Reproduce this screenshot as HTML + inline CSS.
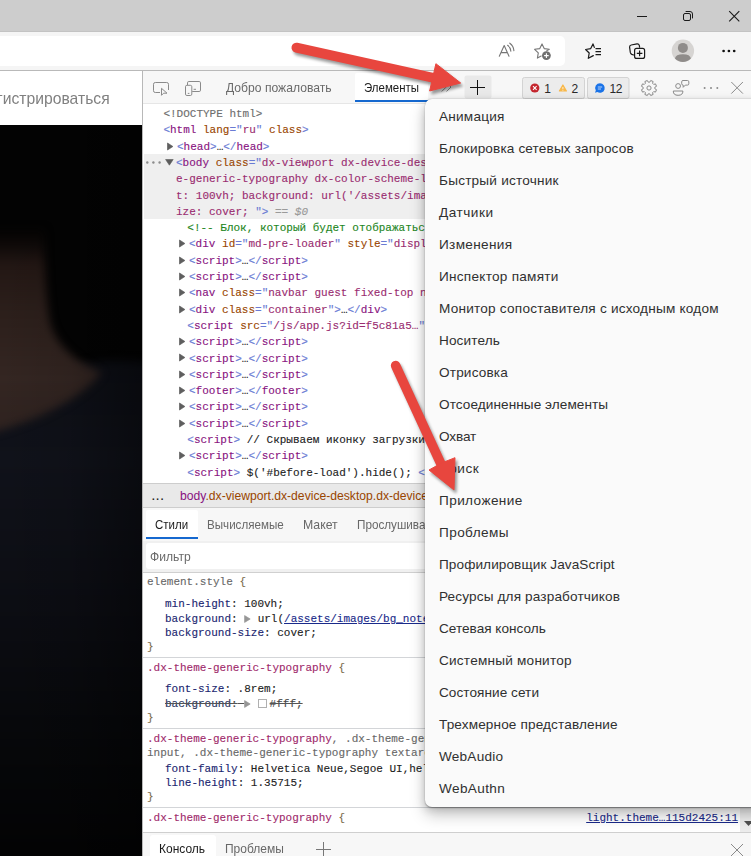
<!DOCTYPE html>
<html lang="ru">
<head>
<meta charset="utf-8">
<title>DevTools</title>
<style>
*{box-sizing:border-box;margin:0;padding:0}
html,body{width:751px;height:856px;overflow:hidden;background:#fff}
body{position:relative;font-family:"Liberation Sans",sans-serif;font-size:12px;color:#1b1b1b}
.abs{position:absolute}
svg{display:block;overflow:visible}
#titlebar{left:0;top:0;width:751px;height:32px;background:#cdcdcd}
#toolbar{left:0;top:31px;width:751px;height:40px;background:#f5f5f5;border-bottom:1px solid #b9b9b9;border-top:1px solid #c3c3c3}
#addr{left:-10px;top:36px;width:575px;height:30px;background:#fff;border-radius:5px}
#page{left:0;top:71px;width:142px;height:785px;background:#fff;overflow:hidden}
#pagetxt{left:-3.2px;top:17.3px;font-size:16.4px;color:#808080;white-space:nowrap;line-height:20px;transform:scaleX(0.957);transform-origin:0 50%}
#hero{left:0;top:54px;width:142px;height:731px;background:#040406}
#dt{left:142px;top:71px;width:609px;height:785px;background:#fff;border-left:1px solid #b8b8b8;overflow:hidden}
#dt > *{position:absolute}
#dtbar{left:0;top:0;width:609px;height:33px;background:#f7f7f7;border-bottom:1px solid #e6e6e6}
.tab{position:absolute;font-size:12px;line-height:16px;white-space:nowrap;color:#686868}
.mono{font-family:"Liberation Mono",monospace;font-size:11px;-webkit-text-stroke:0.12px currentColor;white-space:pre;line-height:16px;height:16px;color:#222}
.ln{position:absolute}
.t{color:#881280}.an{color:#994500}.av{color:#9a2c70}.c{color:#1d861d}.g{color:#6e6e6e}.b{color:#6a7bd4}
.k{color:#222}.eq{color:#9a9a9a;font-style:italic}
.sel{color:#a02a6c}.gr{color:#686868}.pn{color:#1a1f70}.pv{color:#222}.br{color:#7a6a4a}
#hl{left:1px;top:83px;width:609px;height:65px;background:#efefef}
#crumbs{left:0;top:412px;width:609px;height:25px;background:#e9e9e9;border-top:1px solid #cdcdcd;border-bottom:1px solid #cdcdcd}
#stabs{left:0;top:437px;width:609px;height:33px;background:#f7f7f7}
#filter{left:0;top:470px;width:609px;height:32px;background:#f0f0f0;border-bottom:1px solid #d0d0d0}
.tri{display:inline-block;width:13.4px;vertical-align:-1px}.tri svg{display:inline-block}
.sw{display:inline-block;width:9px;height:9px;border:1px solid #b0b0b0;background:#fff;vertical-align:-1px;margin-right:2.6px;margin-left:0.4px}
.lk{color:#1a2a8a;text-decoration:underline}
.strike{text-decoration:line-through;text-decoration-color:#555}
.strike .pn{color:#2a3560}.strike .pv{color:#444}
.hr{position:absolute;left:0;width:609px;height:1px;background:#d3d5d8}
#drawer{left:0;top:761px;width:609px;height:24px;background:#f7f7f7;border-top:1px solid #cfcfcf}
#menu{left:425px;top:99px;width:340px;height:708px;background:#fafafa;border-radius:7px 0 0 7px;box-shadow:0 0.5px 1.5px rgba(0,0,0,.32), 0 8px 16px rgba(0,0,0,.22), -1px 3px 9px rgba(0,0,0,.13)}
.mi{position:absolute;left:14px;font-size:13.6px;line-height:18px;height:18px;white-space:nowrap;color:#303030}
</style>
</head>
<body>
<div id="titlebar" class="abs"></div>
<div id="toolbar" class="abs"></div>
<div id="addr" class="abs"></div>
<svg class="abs" style="left:0;top:0" width="751" height="71" viewBox="0 0 751 71" fill="none">
  <!-- window controls -->
  <path d="M637 16.5 H647" stroke="#1a1a1a" stroke-width="1"/>
  <rect x="683.5" y="13.5" width="7" height="7" rx="1.5" stroke="#1a1a1a" stroke-width="1"/>
  <path d="M685.6 11.5 H690 Q692.5 11.5 692.5 14 V18.400" stroke="#1a1a1a" stroke-width="1"/>
  <path d="M729.2 11.2 L739.3 21.3 M739.3 11.2 L729.2 21.3" stroke="#1a1a1a" stroke-width="1.1"/>
  <!-- read aloud -->
  <g stroke="#767676" stroke-width="1.1" stroke-linecap="round" stroke-linejoin="round">
    <path d="M499.3 56.3 L504.2 45.6 L509 56.3 M501 52.6 H507.4"/>
    <path d="M507.6 45.3 Q510.6 47.4 510.9 51.2"/>
    <path d="M509.8 43.2 Q513.6 46 513.9 50.6"/>
  </g>
  <!-- add favorite -->
  <path d="M546.6 50.9 L549.3 49.3 L544.2 48.6 L542 43.9 L539.8 48.6 L534.6 49.3 L538.3 52.9 L537.4 58.1 L541.2 56.1" stroke="#767676" stroke-width="1.1" stroke-linejoin="round" stroke-linecap="round"/>
  <circle cx="546.4" cy="55.6" r="4.4" fill="#6e6e6e"/>
  <path d="M546.4 53.3 V57.9 M544.1 55.6 H548.7" stroke="#fff" stroke-width="1.1"/>
  <!-- favorites -->
  <path d="M594.3 47.4 L593 43.9 L590.6 48.7 L585.6 49.5 L589.2 53 L588.3 58.3 L593.3 55.6" stroke="#1a1a1a" stroke-width="1.2" stroke-linejoin="round" stroke-linecap="round"/>
  <path d="M595.5 48.7 H601 M595.5 51.7 H601 M595.5 54.7 H601" stroke="#1a1a1a" stroke-width="1.2"/>
  <!-- collections -->
  <path d="M633.6 55 L631.8 54.4 Q630.6 53.8 630.3 52.4 L629.6 47.2 Q629.4 45.4 631.2 45 L637 43.9 Q638.8 43.7 639.3 45.4 L639.6 47.2" stroke="#1a1a1a" stroke-width="1.2" stroke-linecap="round"/>
  <rect x="634.6" y="48.4" width="10" height="10" rx="2" stroke="#1a1a1a" stroke-width="1.2"/>
  <path d="M639.6 50.6 V56.2 M636.8 53.4 H642.4" stroke="#1a1a1a" stroke-width="1.2"/>
  <!-- profile -->
  <circle cx="682.9" cy="50.8" r="11.2" fill="#d6d4d2"/>
  <circle cx="682.9" cy="47.9" r="5" fill="#8f8c8a"/>
  <path d="M674.9 58.6 Q675.6 54.2 682.9 54.2 Q690.2 54.2 690.9 58.6 Q687.6 62 682.9 62 Q678.2 62 674.9 58.6 Z" fill="#8f8c8a"/>
  <!-- more -->
  <circle cx="723.6" cy="51" r="1.35" fill="#111"/><circle cx="728.9" cy="51" r="1.35" fill="#111"/><circle cx="734.2" cy="51" r="1.35" fill="#111"/>
</svg>

<div id="page" class="abs">
  <div id="pagetxt" class="abs">гистрироваться</div>
  <div id="hero" class="abs"><svg width="142" height="731" viewBox="0 125 142 731">
<defs>
<filter id="hb" color-interpolation-filters="sRGB" x="-30%" y="-30%" width="160%" height="160%"><feGaussianBlur stdDeviation="4"/></filter>
<linearGradient id="cl" gradientUnits="userSpaceOnUse" x1="0" y1="360" x2="0" y2="856"><stop offset="0" stop-color="#0d0f16"/><stop offset="0.2" stop-color="#10121a"/><stop offset="0.5" stop-color="#0c0d13"/><stop offset="0.8" stop-color="#060709"/><stop offset="1" stop-color="#030304"/></linearGradient>
<linearGradient id="sk" gradientUnits="userSpaceOnUse" x1="0" y1="230" x2="0" y2="436"><stop offset="0" stop-color="#050403"/><stop offset="0.06" stop-color="#0c0807"/><stop offset="0.17" stop-color="#231714"/><stop offset="0.4" stop-color="#2c1f1b"/><stop offset="0.72" stop-color="#342622"/><stop offset="1" stop-color="#2e221f"/></linearGradient>
<linearGradient id="dk" x1="0" y1="0" x2="1" y2="0"><stop offset="0" stop-color="#000" stop-opacity="0"/><stop offset="0.5" stop-color="#000" stop-opacity="0.1"/><stop offset="1" stop-color="#000" stop-opacity="0.4"/></linearGradient>
</defs>
<rect x="0" y="125" width="142" height="731" fill="#030303"/>
<path d="M-20 380 L96 362 Q125 358 170 366 V880 H-20 Z" fill="url(#cl)" filter="url(#hb)"/>
<path d="M-30 230 H44 Q45 290 50 322 Q58 354 102 373 Q62 418 -30 438 Z" fill="url(#sk)" filter="url(#hb)"/>
<rect x="0" y="125" width="142" height="731" fill="url(#dk)"/>
</svg></div>
</div>
<div id="dt" class="abs">
  <div id="dtbar"></div>
  <svg style="left:0;top:0" width="609" height="33" viewBox="143 71 609 33" fill="none">
  <!-- inspect -->
  <path d="M160 92.5 H155.3 Q153.5 92.5 153.5 90.7 V84.3 Q153.5 82.5 155.3 82.5 H166.7 Q168.5 82.5 168.5 84.3 V90" stroke="#8a8a8a" stroke-width="1"/>
  <path d="M161.5 88.3 V95.3 L163.6 93.2 H167 Z" stroke="#8a8a8a" stroke-width="1" stroke-linejoin="round"/>
  <!-- device -->
  <rect x="185.5" y="85.3" width="6.3" height="10.2" rx="1.4" stroke="#8a8a8a" stroke-width="1"/>
  <path d="M187.5 85 V82.8 Q187.5 81.5 188.8 81.5 H199.2 Q200.5 81.5 200.5 82.8 V90.2 Q200.5 91.5 199.2 91.5 H192.2" stroke="#8a8a8a" stroke-width="1"/>
  <path d="M187.8 93.4 H189.4 M193.6 89.3 H196" stroke="#8a8a8a" stroke-width="1"/>
  <!-- elements tab -->
  <rect x="355" y="73" width="73" height="28" rx="2" fill="#fff"/>
  <rect x="355" y="100" width="73" height="2" fill="#1568cf"/>
  <!-- more tabs chevron -->
  <path d="M441.7 82.5 L446.2 87 L441.700 91.500 M446.500 82.500 L451 87 L446.500 91.500" stroke="#8e8e8e" stroke-width="1"/>
  <!-- plus button -->
  <rect x="464.5" y="75.5" width="27" height="23" rx="2" fill="#e9e9e9"/>
  <path d="M477.5 80 V95 M470 87.5 H485" stroke="#111" stroke-width="1"/>
  <!-- badges -->
  <rect x="522.5" y="77.5" width="62" height="21" rx="2" fill="#ececec" stroke="#d3d3d3"/>
  <rect x="587.5" y="77.5" width="41.5" height="21" rx="2" fill="#ececec" stroke="#d3d3d3"/>
  <circle cx="534.8" cy="88" r="4.6" fill="#c4262e"/>
  <path d="M533 86.2 L536.6 89.8 M536.6 86.2 L533 89.8" stroke="#fff" stroke-width="1.1"/>
  <path d="M562.9 85 L566.4 91 H559.4 Z" fill="#f8b84a" stroke="#f8b84a" stroke-width="1.2" stroke-linejoin="round"/>
  <path d="M562.9 87 V89.300 M562.9 90.100 V90.800" stroke="#fff" stroke-width="0.9" opacity="0.85"/>
  <path d="M600 83.2 A4.8 4.8 0 1 1 597.3 92 L595 92.8 L595.8 90.4 A4.8 4.8 0 0 1 600 83.2 Z" fill="#1a73e8"/>
  <path d="M597.8 87 H602.2 M597.8 89 H601" stroke="#cfe0fb" stroke-width="0.9"/>
  <!-- gear -->
  <g stroke="#8a8a8a" stroke-width="1" fill="none">
    <circle cx="649" cy="88" r="2.1"/>
    <path d="M654.85 88.78 L656.51 89.70 L655.51 92.11 L653.69 91.58 L652.58 92.69 L653.11 94.51 L650.70 95.51 L649.78 93.85 L648.22 93.85 L647.30 95.51 L644.89 94.51 L645.42 92.69 L644.31 91.58 L642.49 92.11 L641.49 89.70 L643.15 88.78 L643.15 87.22 L641.49 86.30 L642.49 83.89 L644.31 84.42 L645.42 83.31 L644.89 81.49 L647.30 80.49 L648.22 82.15 L649.78 82.15 L650.70 80.49 L653.11 81.49 L652.58 83.31 L653.69 84.42 L655.51 83.89 L656.51 86.30 L654.85 87.22 Z" stroke-linejoin="round"/>
  </g>
  <!-- feedback -->
  <g stroke="#8a8a8a" stroke-width="1" fill="none">
    <circle cx="678.1" cy="86" r="2.4"/>
    <path d="M673.3 91 H682.9 Q683 95.300 678.100 95.300 Q673.200 95.300 673.300 91 Z" stroke-linejoin="round"/>
    <path d="M683 80.500 H687.500 Q688.800 80.500 688.800 81.800 V83.800 Q688.800 85.100 687.500 85.100 H685.300 L683.200 87.300 V85.100 Q681.700 85.100 681.700 83.800 V81.800 Q681.700 80.500 683 80.500 Z" stroke-linejoin="round"/>
  </g>
  <!-- dots -->
  <circle cx="704.6" cy="88" r="1" fill="#8a8a8a"/><circle cx="711" cy="88" r="1" fill="#8a8a8a"/><circle cx="717.3" cy="88" r="1" fill="#8a8a8a"/>
  <!-- close -->
  <path d="M731.3 82 L742.9 93.600 M742.900 82 L731.300 93.600" stroke="#8a8a8a" stroke-width="1"/>
</svg>
<div class="tab" style="left:401.2px;top:9.5px;color:#2a2a2a;font-size:12px">1</div>
<div class="tab" style="left:428.4px;top:9.5px;color:#2a2a2a;font-size:12px">2</div>
<div class="tab" style="left:466.6px;top:9.5px;color:#2a2a2a;font-size:12px;letter-spacing:-0.4px">12</div>
<div class="tab" style="left:82.5px;top:8.5px;font-size:13px;color:#6a6a6a;transform:scaleX(0.933);transform-origin:0 50%;">Добро пожаловать</div><div class="tab" style="left:221.2px;top:8.5px;font-size:13px;color:#1b1b1b;transform:scaleX(0.881);transform-origin:0 50%;">Элементы</div>
  <div id="hl"></div>
<div class="mono ln" style="left:20.400000000000006px;top:35.0px"><span class="g">&lt;!DOCTYPE html&gt;</span></div>
<div class="mono ln" style="left:20.400000000000006px;top:51.3px"><span class="b">&lt;</span><span class="t">html</span> <span class="an">lang</span><span class="b">="</span><span class="av">ru</span><span class="b">"</span> <span class="an">class</span><span class="b">&gt;</span></div>
<div class="mono ln" style="left:34px;top:67.6px"><span class="b">&lt;</span><span class="t">head</span><span class="b">&gt;</span><span class="k">…</span><span class="b">&lt;/</span><span class="t">head</span><span class="b">&gt;</span></div>
<svg class="abs" style="left:24.4px;top:70.5px" width="7" height="9" viewBox="0 0 7 9"><path d="M0.5 1 L5.900 4.500 L0.500 8 Z" fill="#5e5e5e" stroke="#5e5e5e" stroke-width="0.7" stroke-linejoin="round"/></svg>
<div class="mono ln" style="left:33px;top:83.9px"><span class="b">&lt;</span><span class="t">body</span> <span class="an">class</span><span class="b">="</span><span class="av">dx-viewport dx-device-des</span></div>
<svg class="abs" style="left:21.5px;top:88.1px" width="9" height="7" viewBox="0 0 9 7"><path d="M0.6 0.5 L8.2 0.5 L4.4 6.2 Z" fill="#5c5c5c" stroke="#5c5c5c" stroke-width="0.6" stroke-linejoin="round"/></svg><svg class="abs" style="left:3px;top:89.8px" width="15" height="3" viewBox="0 0 15 3"><circle cx="1.300" cy="1.500" r="1.200" fill="#8c8c8c"/><circle cx="7.400" cy="1.500" r="1.200" fill="#8c8c8c"/><circle cx="13.600" cy="1.500" r="1.200" fill="#8c8c8c"/></svg>
<div class="mono ln" style="left:33px;top:100.2px"><span class="av">e-generic-typography dx-color-scheme-l</span></div>
<div class="mono ln" style="left:33px;top:116.5px"><span class="av">t: 100vh; background: url('/assets/ima</span></div>
<div class="mono ln" style="left:33px;top:132.8px"><span class="av">ize: cover; </span><span class="b">"&gt;</span><span class="eq"> == $0</span></div>
<div class="mono ln" style="left:44.30000000000001px;top:149.1px"><span class="c">&lt;!-- Блок, который будет отображатьс</span></div>
<div class="mono ln" style="left:46px;top:165.4px"><span class="b">&lt;</span><span class="t">div</span> <span class="an">id</span><span class="b">="</span><span class="av">md-pre-loader</span><span class="b">"</span> <span class="an">style</span><span class="b">="</span><span class="av">displ</span></div>
<svg class="abs" style="left:36.4px;top:168.3px" width="7" height="9" viewBox="0 0 7 9"><path d="M0.5 1 L5.900 4.500 L0.500 8 Z" fill="#5e5e5e" stroke="#5e5e5e" stroke-width="0.7" stroke-linejoin="round"/></svg>
<div class="mono ln" style="left:46px;top:181.7px"><span class="b">&lt;</span><span class="t">script</span><span class="b">&gt;</span><span class="k">…</span><span class="b">&lt;/</span><span class="t">script</span><span class="b">&gt;</span></div>
<svg class="abs" style="left:36.4px;top:184.6px" width="7" height="9" viewBox="0 0 7 9"><path d="M0.5 1 L5.900 4.500 L0.500 8 Z" fill="#5e5e5e" stroke="#5e5e5e" stroke-width="0.7" stroke-linejoin="round"/></svg>
<div class="mono ln" style="left:46px;top:198.0px"><span class="b">&lt;</span><span class="t">script</span><span class="b">&gt;</span><span class="k">…</span><span class="b">&lt;/</span><span class="t">script</span><span class="b">&gt;</span></div>
<svg class="abs" style="left:36.4px;top:200.9px" width="7" height="9" viewBox="0 0 7 9"><path d="M0.5 1 L5.900 4.500 L0.500 8 Z" fill="#5e5e5e" stroke="#5e5e5e" stroke-width="0.7" stroke-linejoin="round"/></svg>
<div class="mono ln" style="left:46px;top:214.3px"><span class="b">&lt;</span><span class="t">nav</span> <span class="an">class</span><span class="b">="</span><span class="av">navbar guest fixed-top n</span></div>
<svg class="abs" style="left:36.4px;top:217.2px" width="7" height="9" viewBox="0 0 7 9"><path d="M0.5 1 L5.900 4.500 L0.500 8 Z" fill="#5e5e5e" stroke="#5e5e5e" stroke-width="0.7" stroke-linejoin="round"/></svg>
<div class="mono ln" style="left:46px;top:230.6px"><span class="b">&lt;</span><span class="t">div</span> <span class="an">class</span><span class="b">="</span><span class="av">container</span><span class="b">"&gt;</span><span class="k">…</span><span class="b">&lt;/</span><span class="t">div</span><span class="b">&gt;</span></div>
<svg class="abs" style="left:36.4px;top:233.5px" width="7" height="9" viewBox="0 0 7 9"><path d="M0.5 1 L5.900 4.500 L0.500 8 Z" fill="#5e5e5e" stroke="#5e5e5e" stroke-width="0.7" stroke-linejoin="round"/></svg>
<div class="mono ln" style="left:44.30000000000001px;top:246.9px"><span class="b">&lt;</span><span class="t">script</span> <span class="an">src</span><span class="b">="</span><span class="av">/js/app.js?id=f5c81a5…</span><span class="b">"</span> <span class="an">type</span></div>
<div class="mono ln" style="left:46px;top:263.2px"><span class="b">&lt;</span><span class="t">script</span><span class="b">&gt;</span><span class="k">…</span><span class="b">&lt;/</span><span class="t">script</span><span class="b">&gt;</span></div>
<svg class="abs" style="left:36.4px;top:266.1px" width="7" height="9" viewBox="0 0 7 9"><path d="M0.5 1 L5.900 4.500 L0.500 8 Z" fill="#5e5e5e" stroke="#5e5e5e" stroke-width="0.7" stroke-linejoin="round"/></svg>
<div class="mono ln" style="left:46px;top:279.5px"><span class="b">&lt;</span><span class="t">script</span><span class="b">&gt;</span><span class="k">…</span><span class="b">&lt;/</span><span class="t">script</span><span class="b">&gt;</span></div>
<svg class="abs" style="left:36.4px;top:282.4px" width="7" height="9" viewBox="0 0 7 9"><path d="M0.5 1 L5.900 4.500 L0.500 8 Z" fill="#5e5e5e" stroke="#5e5e5e" stroke-width="0.7" stroke-linejoin="round"/></svg>
<div class="mono ln" style="left:46px;top:295.8px"><span class="b">&lt;</span><span class="t">script</span><span class="b">&gt;</span><span class="k">…</span><span class="b">&lt;/</span><span class="t">script</span><span class="b">&gt;</span></div>
<svg class="abs" style="left:36.4px;top:298.7px" width="7" height="9" viewBox="0 0 7 9"><path d="M0.5 1 L5.900 4.500 L0.500 8 Z" fill="#5e5e5e" stroke="#5e5e5e" stroke-width="0.7" stroke-linejoin="round"/></svg>
<div class="mono ln" style="left:46px;top:312.1px"><span class="b">&lt;</span><span class="t">footer</span><span class="b">&gt;</span><span class="k">…</span><span class="b">&lt;/</span><span class="t">footer</span><span class="b">&gt;</span></div>
<svg class="abs" style="left:36.4px;top:315.0px" width="7" height="9" viewBox="0 0 7 9"><path d="M0.5 1 L5.900 4.500 L0.500 8 Z" fill="#5e5e5e" stroke="#5e5e5e" stroke-width="0.7" stroke-linejoin="round"/></svg>
<div class="mono ln" style="left:46px;top:328.4px"><span class="b">&lt;</span><span class="t">script</span><span class="b">&gt;</span><span class="k">…</span><span class="b">&lt;/</span><span class="t">script</span><span class="b">&gt;</span></div>
<svg class="abs" style="left:36.4px;top:331.3px" width="7" height="9" viewBox="0 0 7 9"><path d="M0.5 1 L5.900 4.500 L0.500 8 Z" fill="#5e5e5e" stroke="#5e5e5e" stroke-width="0.7" stroke-linejoin="round"/></svg>
<div class="mono ln" style="left:46px;top:344.7px"><span class="b">&lt;</span><span class="t">script</span><span class="b">&gt;</span><span class="k">…</span><span class="b">&lt;/</span><span class="t">script</span><span class="b">&gt;</span></div>
<svg class="abs" style="left:36.4px;top:347.6px" width="7" height="9" viewBox="0 0 7 9"><path d="M0.5 1 L5.900 4.500 L0.500 8 Z" fill="#5e5e5e" stroke="#5e5e5e" stroke-width="0.7" stroke-linejoin="round"/></svg>
<div class="mono ln" style="left:44.30000000000001px;top:361.0px"><span class="b">&lt;</span><span class="t">script</span><span class="b">&gt;</span><span class="k"> // Скрываем иконку загрузки после</span></div>
<div class="mono ln" style="left:46px;top:377.3px"><span class="b">&lt;</span><span class="t">script</span><span class="b">&gt;</span><span class="k">…</span><span class="b">&lt;/</span><span class="t">script</span><span class="b">&gt;</span></div>
<svg class="abs" style="left:36.4px;top:380.2px" width="7" height="9" viewBox="0 0 7 9"><path d="M0.5 1 L5.900 4.500 L0.500 8 Z" fill="#5e5e5e" stroke="#5e5e5e" stroke-width="0.7" stroke-linejoin="round"/></svg>
<div class="mono ln" style="left:44.30000000000001px;top:393.6px"><span class="b">&lt;</span><span class="t">script</span><span class="b">&gt;</span><span class="k"> $('#before-load').hide(); </span><span class="b">&lt;/</span><span class="t">script</span></div>
  <div id="crumbs"></div>
  <div id="stabs"></div>
  <div id="filter"></div>
<div class="mono ln" style="left:4px;top:503.3px;"><span class="gr">element.style</span><span class="br"> {</span></div>
<div class="mono ln" style="left:22px;top:525.0px;"><span class="pn">min-height</span><span class="pv">: 100vh;</span></div>
<div class="mono ln" style="left:22px;top:540.0px;"><span class="pn">background</span><span class="pv">:</span> <span class="tri"><svg width="7" height="8" viewBox="0 0 7 8"><path d="M0.6 0.6 L6.2 4 L0.6 7.400 Z" fill="#969696" stroke="#969696" stroke-width="0.7" stroke-linejoin="round"/></svg></span><span class="pv">url(</span><span class="lk">/assets/images/bg_notebook.jpg</span></div>
<div class="mono ln" style="left:22px;top:554.0px;"><span class="pn">background-size</span><span class="pv">: cover;</span></div>
<div class="mono ln" style="left:4px;top:567.6px;"><span class="br">}</span></div>
<div class="hr" style="top:586px"></div>
<div class="mono ln" style="left:4px;top:589.2px;"><span class="sel">.dx-theme-generic-typography</span><span class="br"> {</span></div>
<div class="mono ln" style="left:22px;top:609.6px;"><span class="pn">font-size</span><span class="pv">: .8rem;</span></div>
<div class="mono ln" style="left:22px;top:625.0px;"><span class="strike"><span class="pn">background</span><span class="pv">:</span> <span class="tri"><svg width="7" height="8" viewBox="0 0 7 8"><path d="M0.6 0.6 L6.2 4 L0.6 7.400 Z" fill="#969696" stroke="#969696" stroke-width="0.7" stroke-linejoin="round"/></svg></span><span class="sw"></span><span class="pv">#fff;</span></span></div>
<div class="mono ln" style="left:4px;top:638.6px;"><span class="br">}</span></div>
<div class="hr" style="top:657px"></div>
<div class="mono ln" style="left:4px;top:660.2px;"><span class="sel">.dx-theme-generic-typography</span><span class="gr">, .dx-theme-generic-typography</span></div>
<div class="mono ln" style="left:4px;top:674.2px;"><span class="gr">input, .dx-theme-generic-typography textarea</span></div>
<div class="mono ln" style="left:22px;top:689.6px;"><span class="pn">font-family</span><span class="pv">: Helvetica Neue,Segoe UI,helvetica</span></div>
<div class="mono ln" style="left:22px;top:704.0px;"><span class="pn">line-height</span><span class="pv">: 1.35715;</span></div>
<div class="mono ln" style="left:4px;top:717.6px;"><span class="br">}</span></div>
<div class="hr" style="top:736px"></div>
<div class="mono ln" style="left:4px;top:739.2px;"><span class="sel">.dx-theme-generic-typography</span><span class="br"> {</span></div>
<div class="mono ln" style="left:443.20000000000005px;top:739.2px;"><span class="lk">light.theme…115d2425:11</span></div>
<div style="left:597px;top:737px;width:12px;height:24px;background:#ececec"></div>
<svg style="left:601px;top:749.6px" width="9" height="5" viewBox="0 0 9 5"><path d="M0 0 H9 L4.500 5 Z" fill="#505050"/></svg>
<div class="tab" style="left:8.2px;top:416px;color:#222;font-size:15px;letter-spacing:0.2px">...</div>
<div class="tab" style="left:37px;top:417px;font-size:12.15px"><span class="t">body</span><span class="an">.dx-viewport.dx-device-desktop.dx-device-generic</span></div>
<div style="left:3px;top:439px;width:52px;height:29px;background:#fff;border-radius:2px 2px 0 0"></div>
<div style="left:3px;top:466px;width:52px;height:2px;background:#1568cf"></div>
<div class="tab" style="left:12.2px;top:446.0px;font-size:13px;color:#1b1b1b;transform:scaleX(0.883);transform-origin:0 50%;">Стили</div>
<div class="tab" style="left:64.3px;top:446.0px;font-size:13px;color:#686868;transform:scaleX(0.893);transform-origin:0 50%;">Вычисляемые</div>
<div class="tab" style="left:159.8px;top:446.0px;font-size:13px;color:#686868;transform:scaleX(0.944);transform-origin:0 50%;">Макет</div>
<div class="tab" style="left:214.0px;top:446.0px;font-size:13px;color:#686868;transform:scaleX(0.9);transform-origin:0 50%;">Прослушиватели</div>
<div style="left:3px;top:472px;width:620px;height:26px;background:#fff;border-radius:3px"></div>
<div class="tab" style="left:6.5px;top:477.5px;font-size:13px;color:#6a6a6a;transform:scaleX(0.932);transform-origin:0 50%;">Фильтр</div>
  <div id="drawer"></div>
<div style="left:7px;top:764px;width:66px;height:30px;background:#fff;border-radius:3px 3px 0 0"></div>
<div class="tab" style="left:16.3px;top:770.3px;font-size:13px;color:#1b1b1b;transform:scaleX(0.922);transform-origin:0 50%;">Консоль</div>
<div class="tab" style="left:82.3px;top:770.3px;font-size:13px;color:#686868;transform:scaleX(0.922);transform-origin:0 50%;">Проблемы</div>
<svg style="left:173px;top:770.5px" width="15" height="15" viewBox="0 0 15 15"><path d="M7.5 0 V15 M0 7.5 H15" stroke="#777" stroke-width="1"/></svg>
<svg style="left:588px;top:773px" width="12" height="12" viewBox="0 0 12 12"><path d="M0 0 L12 12 M12 0 L0 12" stroke="#8a8a8a" stroke-width="1"/></svg>
</div>
<div id="menu" class="abs">
<div class="mi" style="top:9px;letter-spacing:0.22px">Анимация</div>
<div class="mi" style="top:41px;letter-spacing:0.14px">Блокировка сетевых запросов</div>
<div class="mi" style="top:73px;letter-spacing:0.22px">Быстрый источник</div>
<div class="mi" style="top:105px;letter-spacing:0.52px">Датчики</div>
<div class="mi" style="top:137px;letter-spacing:0.32px">Изменения</div>
<div class="mi" style="top:169px;letter-spacing:0.26px">Инспектор памяти</div>
<div class="mi" style="top:201px;letter-spacing:0.22px">Монитор сопоставителя с исходным кодом</div>
<div class="mi" style="top:233px;letter-spacing:0.12px">Носитель</div>
<div class="mi" style="top:265px;letter-spacing:0.17px">Отрисовка</div>
<div class="mi" style="top:297px;letter-spacing:0.07px">Отсоединенные элементы</div>
<div class="mi" style="top:329px;letter-spacing:-0.13px">Охват</div>
<div class="mi" style="top:361px;letter-spacing:0.52px">Поиск</div>
<div class="mi" style="top:393px;letter-spacing:0.4px">Приложение</div>
<div class="mi" style="top:425px;letter-spacing:0.4px">Проблемы</div>
<div class="mi" style="top:457px;letter-spacing:0.09px">Профилировщик JavaScript</div>
<div class="mi" style="top:489px;letter-spacing:0.14px">Ресурсы для разработчиков</div>
<div class="mi" style="top:521px">Сетевая консоль</div>
<div class="mi" style="top:553px;letter-spacing:0.22px">Системный монитор</div>
<div class="mi" style="top:585px;letter-spacing:0.05px">Состояние сети</div>
<div class="mi" style="top:617px;letter-spacing:0.13px">Трехмерное представление</div>
<div class="mi" style="top:649px;letter-spacing:0.22px">WebAudio</div>
<div class="mi" style="top:681px;letter-spacing:0.37px">WebAuthn</div>
</div>
<svg class="abs" style="left:0;top:0;pointer-events:none" width="751" height="856" viewBox="0 0 751 856">
<defs><filter id="sh" color-interpolation-filters="sRGB" x="-20%" y="-20%" width="150%" height="150%"><feGaussianBlur in="SourceAlpha" stdDeviation="1.800"/><feOffset dx="1.600" dy="2.800"/><feComponentTransfer><feFuncA type="linear" slope="0.4"/></feComponentTransfer><feMerge><feMergeNode/><feMergeNode in="SourceGraphic"/></feMerge></filter></defs>
<g filter="url(#sh)" fill="#e8463e" stroke="#e8463e" stroke-linejoin="round">
<path d="M296.400 47.600 L434 78" stroke-width="9.8" stroke-linecap="round" fill="none"/>
<path d="M460.700 83 L435.900 63.700 L429.600 91 Z" stroke-width="1"/>
</g>
<g filter="url(#sh)" fill="#e8463e" stroke="#e8463e" stroke-linejoin="round">
<path d="M395.600 365.600 L441 464" stroke-width="9.6" stroke-linecap="round" fill="none"/>
<path d="M454 490 L455 457.700 L441.500 463 L429 470 Z" stroke-width="1"/>
</g>
</svg>
</body>
</html>
